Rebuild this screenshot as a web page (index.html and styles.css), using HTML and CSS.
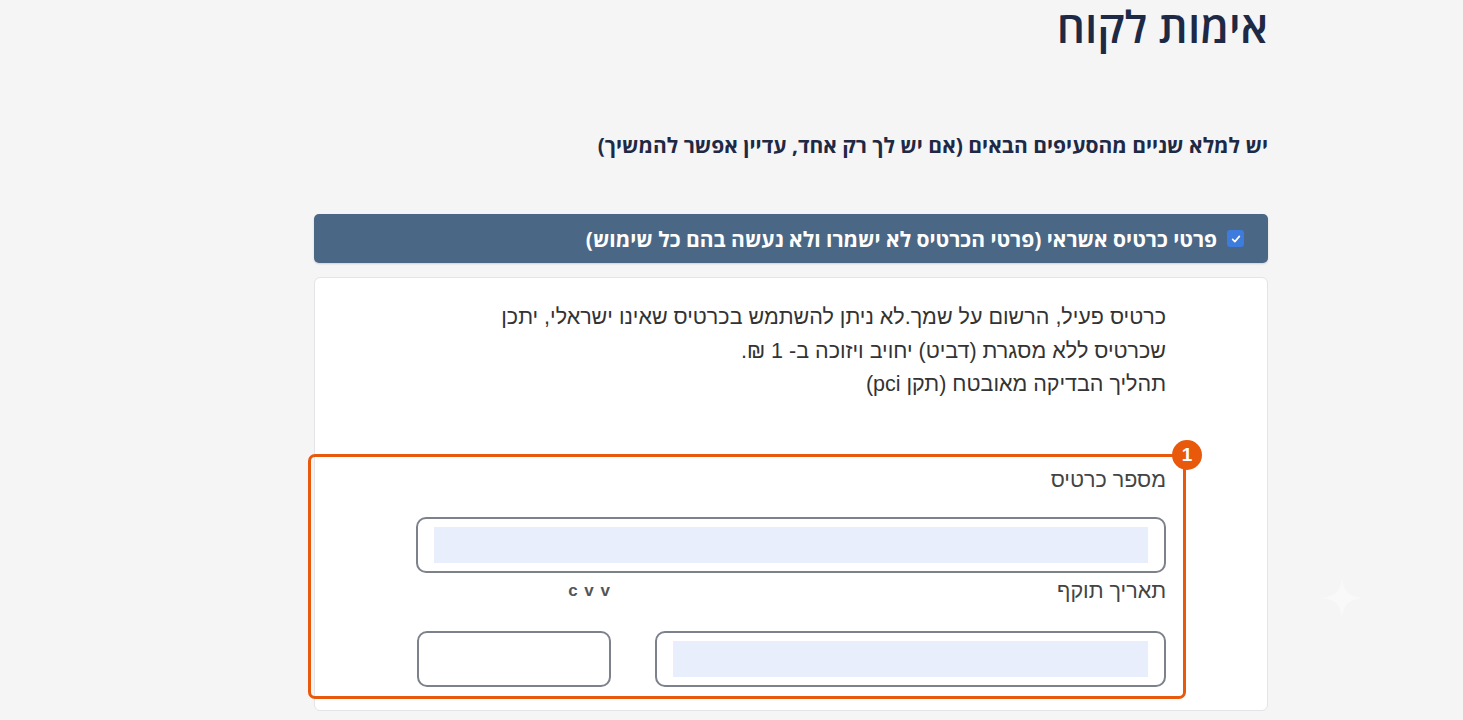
FILE: index.html
```html
<!DOCTYPE html>
<html lang="he" dir="rtl">
<head>
<meta charset="utf-8">
<title>אימות לקוח</title>
<link rel="stylesheet" href="styles.css">
</head>
<body>
<main class="page">
  <h1 class="title">אימות לקוח</h1>
  <p class="subtitle">יש למלא שניים מהסעיפים הבאים (אם יש לך רק אחד, עדיין אפשר להמשיך)</p>

  <div class="section-bar">
    <span class="check">
      <svg viewBox="0 0 16 16" width="12" height="12"><path d="M3.5 8.5 L6.5 11.5 L12.5 4.5" fill="none" stroke="#fff" stroke-width="2.2" stroke-linecap="round" stroke-linejoin="round"/></svg>
    </span>
    <span class="bar-text">פרטי כרטיס אשראי (פרטי הכרטיס לא ישמרו ולא נעשה בהם כל שימוש)</span>
  </div>

  <section class="card">
    <div class="info">
      <p>כרטיס פעיל, הרשום על שמך.לא ניתן להשתמש בכרטיס שאינו ישראלי, יתכן</p>
      <p>שכרטיס ללא מסגרת (דביט) יחויב ויזוכה ב- 1 ₪.</p>
      <p>תהליך הבדיקה מאובטח (תקן pci)</p>
    </div>

    <div class="form">
      <label class="label">מספר כרטיס</label>
      <div class="field field-wide"><span class="fill"></span></div>

      <div class="row">
        <div class="col col-exp">
          <label class="label">תאריך תוקף</label>
          <div class="field"><span class="fill"></span></div>
        </div>
        <div class="col col-cvv">
          <label class="label label-cvv">c v v</label>
          <div class="field"></div>
        </div>
      </div>
    </div>

    <div class="highlight"></div>
    <div class="badge">1</div>
  </section>

  <svg class="sparkle" viewBox="0 0 40 40" width="40" height="40"><path d="M20 0 C22 14 26 18 40 20 C26 22 22 26 20 40 C18 26 14 22 0 20 C14 18 18 14 20 0 Z" fill="#f9f9f9"/></svg>
</main>
</body>
</html>
```

FILE: styles.css
```css
* { box-sizing: border-box; }

html, body {
  margin: 0;
  padding: 0;
  background: #f5f5f5;
  height: 100%;
  overflow: hidden;
}

body {
  font-family: "Liberation Sans", "DejaVu Sans", sans-serif;
  color: #333;
}

.page {
  width: 954px;
  margin-right: 195px;
  position: relative;
}

.title {
  margin: 0;
  padding-top: 2px;
  font-family: "Open Sans", "Liberation Sans", sans-serif;
  font-size: 44px;
  font-weight: 600;
  line-height: 48px;
  color: #1e2945;
}

.subtitle {
  margin: 81px 0 0;
  font-family: "Open Sans", "Liberation Sans", sans-serif;
  font-size: 21px;
  font-weight: 700;
  line-height: 28px;
  color: #1e2945;
}

.section-bar {
  margin-top: 55px;
  height: 49px;
  background: #4a6886;
  border-radius: 5px;
  display: flex;
  align-items: center;
  padding-right: 24px;
  gap: 10px;
  color: #fff;
  box-shadow: 0 1px 2px rgba(0,0,0,0.15);
}

.check {
  width: 17px;
  height: 17px;
  background: #3d7bdc;
  border-radius: 3px;
  display: flex;
  align-items: center;
  justify-content: center;
}

.bar-text {
  font-family: "Open Sans", "Liberation Sans", sans-serif;
  font-size: 21px;
  font-weight: 700;
}

.card {
  position: relative;
  margin-top: 14px;
  height: 434px;
  background: #fff;
  border: 1px solid #e2e4e8;
  border-radius: 6px;
  padding: 23px 101px 0 101px;
}

.info p {
  margin: 0;
  font-size: 21.5px;
  line-height: 33.5px;
  color: #333;
}

.form {
  margin-top: 66px;
}

.label {
  display: block;
  font-size: 21.5px;
  line-height: 24px;
  color: #444;
}

.field {
  height: 56px;
  border: 2px solid #7c818c;
  border-radius: 10px;
  background: #fff;
  padding: 8px 16px;
  margin-top: 25px;
}

.fill {
  display: block;
  height: 36px;
  background: #e8eefb;
}

.row {
  display: flex;
  gap: 44px;
  margin-top: 6px;
}

.col-exp { width: 511px; }
.col-cvv { width: 194px; }

.col .field { margin-top: 28px; }

.label-cvv {
  font-size: 17px;
  font-weight: 700;
  color: #555;
  letter-spacing: 1px;
  direction: ltr;
  text-align: right;
}

.highlight {
  position: absolute;
  left: -7px;
  top: 176px;
  width: 878px;
  height: 245px;
  border: 3px solid #e8590c;
  border-radius: 7px;
  pointer-events: none;
}

.badge {
  position: absolute;
  left: 857px;
  top: 162px;
  width: 30px;
  height: 30px;
  border-radius: 50%;
  background: #e8590c;
  color: #fff;
  font-family: "Liberation Sans", sans-serif;
  font-weight: 700;
  font-size: 19px;
  line-height: 30px;
  text-align: center;
}

.sparkle {
  position: absolute;
  left: 1008px;
  top: 578px;
}
```
